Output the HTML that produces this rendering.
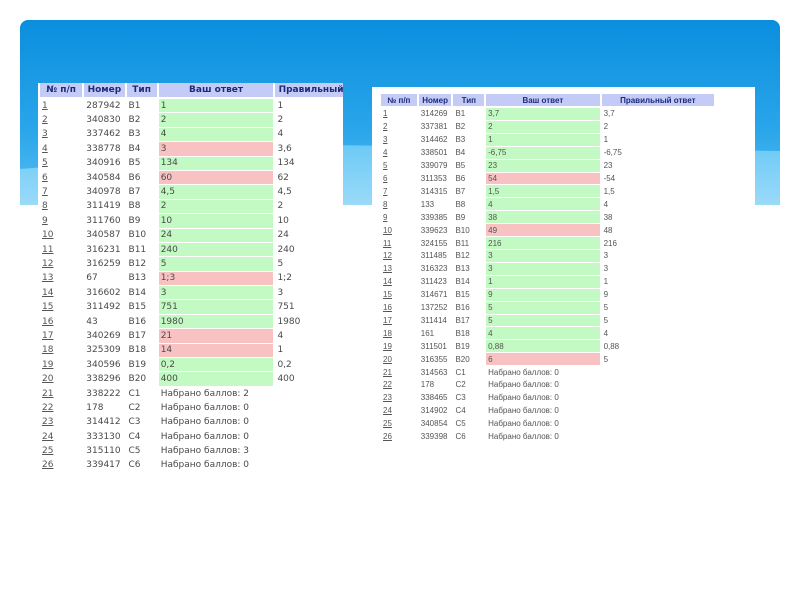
<!DOCTYPE html>
<html><head><meta charset="utf-8"><style>
body{margin:0;width:800px;height:600px;background:#fff;position:relative;overflow:hidden}
.blue{position:absolute;left:20px;top:20px;width:760px;height:185px;border-radius:8px 8px 0 0;background:linear-gradient(#0a8ede,#2aa6ea 60%,#5cc0f2)}
.wave{position:absolute;left:20px;top:145px;width:760px;height:60px;background:linear-gradient(#6ccaf6,#9bdaf8);clip-path:polygon(0 40%,40% 0,100% 10%,100% 100%,0 100%)}
.img{position:absolute;background:#fff;overflow:hidden}
table{border-collapse:separate;position:absolute;table-layout:fixed}
td{padding:0 0 0 2px;white-space:nowrap;overflow:hidden;vertical-align:middle;box-sizing:border-box;border-bottom:solid #fff}
th{background:#c4cbf7;color:#1d2a78;font-weight:bold;padding:0}
.g{background:#c3f9c3}.r{background:#f9c2c2}
u{color:#555}
#L{left:38px;top:83px;width:305px;height:395px}
#L table{left:0;top:0;border-spacing:2px 0;font:9px "DejaVu Sans",sans-serif;color:#4a4a4a;width:320px}
#L td{height:14.4px;border-bottom-width:1.4px}
#L th{height:14px;font-size:9px;border-bottom:2px solid #fff}
#R{left:372px;top:87px;width:383px;height:363px}
#R table{left:7px;top:7px;border-spacing:2px 0;font:8px "Liberation Sans",sans-serif;color:#555;width:337px}
#R td{height:12.92px;border-bottom-width:1.9px}
#R th{height:12px;font-size:8px;border-bottom:2px solid #fff}
</style></head><body>
<div class="blue"></div><div class="wave"></div>
<div class="img" id="L"><table>
<colgroup><col style="width:42px"><col style="width:40px"><col style="width:30px"><col style="width:114px"><col style="width:80px"></colgroup>
<tr><th>№ п/п</th><th>Номер</th><th>Тип</th><th>Ваш ответ</th><th style="text-align:left">&nbsp;Правильный</th></tr>
<tr><td><u>1</u></td><td>287942</td><td>B1</td><td class="g">1</td><td>1</td></tr>
<tr><td><u>2</u></td><td>340830</td><td>B2</td><td class="g">2</td><td>2</td></tr>
<tr><td><u>3</u></td><td>337462</td><td>B3</td><td class="g">4</td><td>4</td></tr>
<tr><td><u>4</u></td><td>338778</td><td>B4</td><td class="r">3</td><td>3,6</td></tr>
<tr><td><u>5</u></td><td>340916</td><td>B5</td><td class="g">134</td><td>134</td></tr>
<tr><td><u>6</u></td><td>340584</td><td>B6</td><td class="r">60</td><td>62</td></tr>
<tr><td><u>7</u></td><td>340978</td><td>B7</td><td class="g">4,5</td><td>4,5</td></tr>
<tr><td><u>8</u></td><td>311419</td><td>B8</td><td class="g">2</td><td>2</td></tr>
<tr><td><u>9</u></td><td>311760</td><td>B9</td><td class="g">10</td><td>10</td></tr>
<tr><td><u>10</u></td><td>340587</td><td>B10</td><td class="g">24</td><td>24</td></tr>
<tr><td><u>11</u></td><td>316231</td><td>B11</td><td class="g">240</td><td>240</td></tr>
<tr><td><u>12</u></td><td>316259</td><td>B12</td><td class="g">5</td><td>5</td></tr>
<tr><td><u>13</u></td><td>67</td><td>B13</td><td class="r">1;3</td><td>1;2</td></tr>
<tr><td><u>14</u></td><td>316602</td><td>B14</td><td class="g">3</td><td>3</td></tr>
<tr><td><u>15</u></td><td>311492</td><td>B15</td><td class="g">751</td><td>751</td></tr>
<tr><td><u>16</u></td><td>43</td><td>B16</td><td class="g">1980</td><td>1980</td></tr>
<tr><td><u>17</u></td><td>340269</td><td>B17</td><td class="r">21</td><td>4</td></tr>
<tr><td><u>18</u></td><td>325309</td><td>B18</td><td class="r">14</td><td>1</td></tr>
<tr><td><u>19</u></td><td>340596</td><td>B19</td><td class="g">0,2</td><td>0,2</td></tr>
<tr><td><u>20</u></td><td>338296</td><td>B20</td><td class="g">400</td><td>400</td></tr>
<tr><td><u>21</u></td><td>338222</td><td>C1</td><td>Набрано баллов: 2</td><td></td></tr>
<tr><td><u>22</u></td><td>178</td><td>C2</td><td>Набрано баллов: 0</td><td></td></tr>
<tr><td><u>23</u></td><td>314412</td><td>C3</td><td>Набрано баллов: 0</td><td></td></tr>
<tr><td><u>24</u></td><td>333130</td><td>C4</td><td>Набрано баллов: 0</td><td></td></tr>
<tr><td><u>25</u></td><td>315110</td><td>C5</td><td>Набрано баллов: 3</td><td></td></tr>
<tr><td><u>26</u></td><td>339417</td><td>C6</td><td>Набрано баллов: 0</td><td></td></tr>
</table></div>
<div class="img" id="R"><table>
<colgroup><col style="width:35px"><col style="width:32px"><col style="width:30px"><col style="width:111px"><col style="width:110px"></colgroup>
<tr><th>№ п/п</th><th>Номер</th><th>Тип</th><th>Ваш ответ</th><th>Правильный ответ</th></tr>
<tr><td><u>1</u></td><td>314269</td><td>B1</td><td class="g">3,7</td><td>3,7</td></tr>
<tr><td><u>2</u></td><td>337381</td><td>B2</td><td class="g">2</td><td>2</td></tr>
<tr><td><u>3</u></td><td>314462</td><td>B3</td><td class="g">1</td><td>1</td></tr>
<tr><td><u>4</u></td><td>338501</td><td>B4</td><td class="g">-6,75</td><td>-6,75</td></tr>
<tr><td><u>5</u></td><td>339079</td><td>B5</td><td class="g">23</td><td>23</td></tr>
<tr><td><u>6</u></td><td>311353</td><td>B6</td><td class="r">54</td><td>-54</td></tr>
<tr><td><u>7</u></td><td>314315</td><td>B7</td><td class="g">1,5</td><td>1,5</td></tr>
<tr><td><u>8</u></td><td>133</td><td>B8</td><td class="g">4</td><td>4</td></tr>
<tr><td><u>9</u></td><td>339385</td><td>B9</td><td class="g">38</td><td>38</td></tr>
<tr><td><u>10</u></td><td>339623</td><td>B10</td><td class="r">49</td><td>48</td></tr>
<tr><td><u>11</u></td><td>324155</td><td>B11</td><td class="g">216</td><td>216</td></tr>
<tr><td><u>12</u></td><td>311485</td><td>B12</td><td class="g">3</td><td>3</td></tr>
<tr><td><u>13</u></td><td>316323</td><td>B13</td><td class="g">3</td><td>3</td></tr>
<tr><td><u>14</u></td><td>311423</td><td>B14</td><td class="g">1</td><td>1</td></tr>
<tr><td><u>15</u></td><td>314671</td><td>B15</td><td class="g">9</td><td>9</td></tr>
<tr><td><u>16</u></td><td>137252</td><td>B16</td><td class="g">5</td><td>5</td></tr>
<tr><td><u>17</u></td><td>311414</td><td>B17</td><td class="g">5</td><td>5</td></tr>
<tr><td><u>18</u></td><td>161</td><td>B18</td><td class="g">4</td><td>4</td></tr>
<tr><td><u>19</u></td><td>311501</td><td>B19</td><td class="g">0,88</td><td>0,88</td></tr>
<tr><td><u>20</u></td><td>316355</td><td>B20</td><td class="r">6</td><td>5</td></tr>
<tr><td><u>21</u></td><td>314563</td><td>C1</td><td>Набрано баллов: 0</td><td></td></tr>
<tr><td><u>22</u></td><td>178</td><td>C2</td><td>Набрано баллов: 0</td><td></td></tr>
<tr><td><u>23</u></td><td>338465</td><td>C3</td><td>Набрано баллов: 0</td><td></td></tr>
<tr><td><u>24</u></td><td>314902</td><td>C4</td><td>Набрано баллов: 0</td><td></td></tr>
<tr><td><u>25</u></td><td>340854</td><td>C5</td><td>Набрано баллов: 0</td><td></td></tr>
<tr><td><u>26</u></td><td>339398</td><td>C6</td><td>Набрано баллов: 0</td><td></td></tr>
</table></div>
</body></html>
